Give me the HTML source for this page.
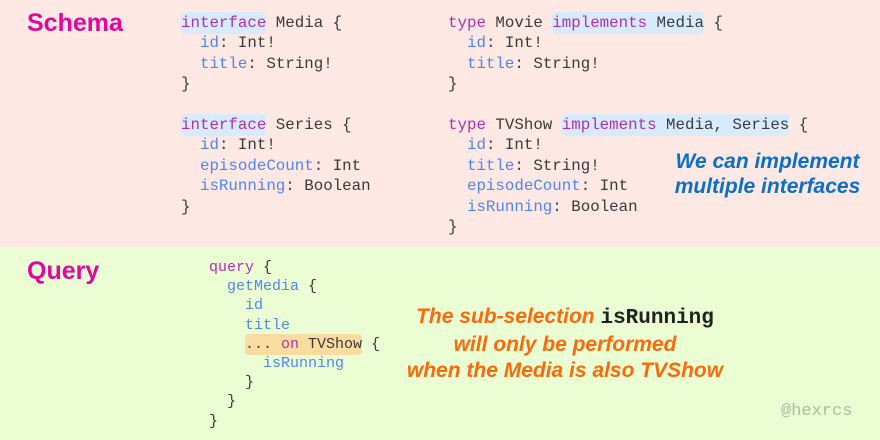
<!DOCTYPE html>
<html><head><meta charset="utf-8"><style>
*{margin:0;padding:0}
body{width:880px;height:440px;position:relative;overflow:hidden;font-family:"Liberation Sans",sans-serif}
.top{position:absolute;left:0;top:0;width:880px;height:247px;background:#fde8e3}
.bot{position:absolute;left:0;top:247px;width:880px;height:193px;background:#ebfdd3}
.h{position:absolute;color:#e0079c;font-weight:bold;font-size:25px}
pre{position:absolute;font-family:"Liberation Mono",monospace;font-size:15.8px;line-height:20.4px;color:#3a3a3a}
.k{color:#b02fb0}.f{color:#4f86f0}
.b{background:#d8ebfd;border-radius:4px;padding:2px 0}
.o{background:#fbdca0;border-radius:4px;padding:2px 0}
.note{position:absolute;font-style:italic;font-weight:bold;text-align:center;font-family:"Liberation Sans",sans-serif}
</style></head><body>
<div class="top"></div><div class="bot"></div>
<div class="h" style="left:27px;top:9px">Schema</div>
<div class="h" style="left:27px;top:257px">Query</div>
<pre style="left:181px;top:13px"><span class="b"><span class="k">interface</span></span> Media {
  <span class="f">id</span>: Int!
  <span class="f">title</span>: String!
}

<span class="b"><span class="k">interface</span></span> Series {
  <span class="f">id</span>: Int!
  <span class="f">episodeCount</span>: Int
  <span class="f">isRunning</span>: Boolean
}</pre>
<pre style="left:448px;top:13px"><span class="k">type</span> Movie <span class="b"><span class="k">implements</span> Media</span> {
  <span class="f">id</span>: Int!
  <span class="f">title</span>: String!
}

<span class="k">type</span> TVShow <span class="b"><span class="k">implements</span> Media, Series</span> {
  <span class="f">id</span>: Int!
  <span class="f">title</span>: String!
  <span class="f">episodeCount</span>: Int
  <span class="f">isRunning</span>: Boolean
}</pre>
<pre style="left:209px;top:258px;font-size:15px;line-height:19.2px"><span class="k">query</span> {
  <span class="f">getMedia</span> {
    <span class="f">id</span>
    <span class="f">title</span>
    <span class="o">... <span class="k">on</span> TVShow</span> {
      <span class="f">isRunning</span>
    }
  }
}</pre>
<div class="note" style="left:660px;top:149px;width:215px;color:#0a6fc9;font-size:21px;line-height:25px">We can implement<br>multiple interfaces</div>
<div class="note" style="left:395px;top:304px;width:340px;color:#fb6a0a;font-size:21px;line-height:26px">The sub-selection <span style="font-style:normal;color:#222;font-family:'Liberation Mono',monospace;font-size:21px">isRunning</span><br>will only be performed<br>when the Media is also TVShow</div>
<pre style="left:781px;top:402px;font-size:17px;color:#a8bfa0">@hexrcs</pre>
</body></html>
